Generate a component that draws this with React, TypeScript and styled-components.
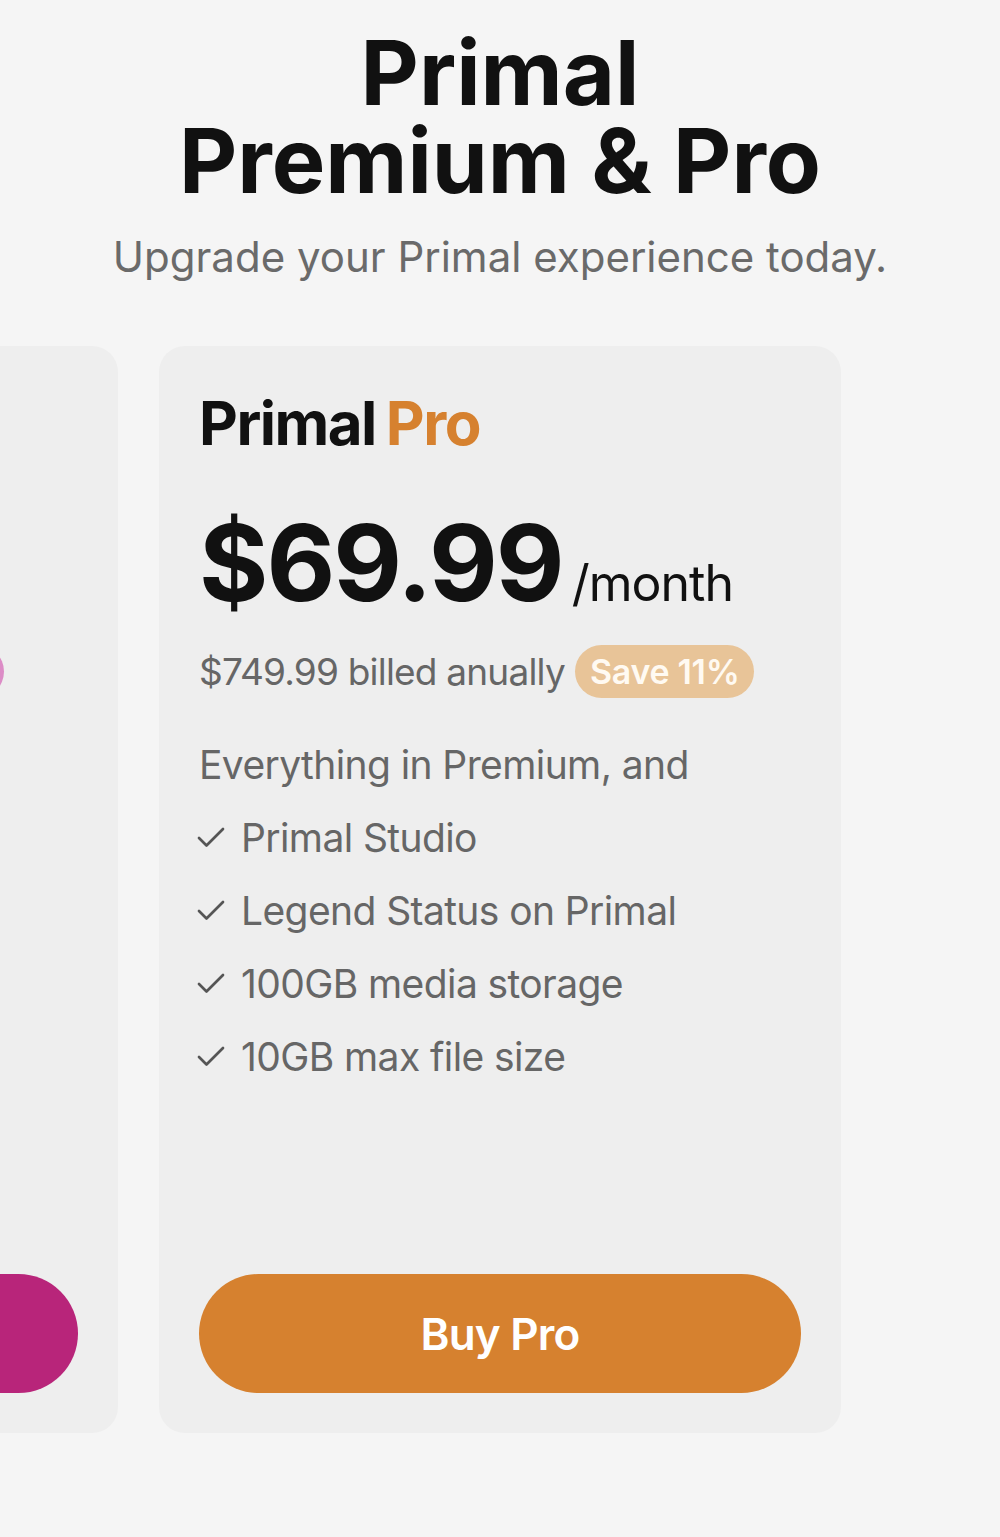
import React from "react";
import styled, { createGlobalStyle } from "styled-components";

const Global = createGlobalStyle`
  html, body { margin: 0; padding: 0; background: #f5f5f5; }
  body { font-family: Inter, "Noto Sans", "Liberation Sans", sans-serif; }
  * { box-sizing: border-box; }
`;

const Page = styled.div`
  width: 1000px;
  height: 1537px;
  overflow: hidden;
  background: #f5f5f5;
  padding-top: 29px;
`;

const Header = styled.header`
  display: flex;
  flex-direction: column;
  align-items: center;
  text-align: center;
`;

const Title = styled.h1`
  margin: 0;
  font-size: 90px;
  line-height: 88px;
  font-weight: 700;
  letter-spacing: 0;
  color: #111111;
`;

const Subtitle = styled.p`
  margin: 24px 0 0;
  font-size: 42px;
  line-height: 56px;
  font-weight: 400;
  color: #6a6a6a;
`;

const Carousel = styled.div`
  margin-top: 61px;
  width: 100%;
`;

const Track = styled.div`
  display: flex;
  gap: 41px;
  margin-left: calc(50% - 341px - 723px);
`;

const Card = styled.section`
  flex: 0 0 682px;
  height: 1087px;
  background: #eeeeee;
  border-radius: 26px;
  padding: 40px;
  display: flex;
  flex-direction: column;
`;

const Brand = styled.div`
  display: flex;
  gap: 10px;
  font-size: 60px;
  line-height: 72px;
  font-weight: 700;
  letter-spacing: -1.5px;
  color: #111111;
  margin-top: 1px;
`;

const BrandAccent = styled.span<{ $color: string }>`
  color: ${(p) => p.$color};
`;

const PriceRow = styled.div`
  display: flex;
  align-items: baseline;
  gap: 9px;
  margin-top: 47px;
`;

const Price = styled.span`
  font-size: 106px;
  line-height: 114px;
  font-weight: 700;
  letter-spacing: -2px;
  color: #111111;
`;

const Period = styled.span`
  font-size: 50px;
  font-weight: 400;
  letter-spacing: -1px;
  color: #111111;
`;

const BilledRow = styled.div`
  display: flex;
  align-items: center;
  gap: 10px;
  margin-top: 25px;
`;

const Billed = styled.span`
  font-size: 37px;
  line-height: 53px;
  color: #666666;
  letter-spacing: -0.8px;
`;

const Badge = styled.span<{ $bg: string }>`
  display: inline-flex;
  align-items: center;
  height: 53px;
  padding: 0 15px;
  border-radius: 27px;
  background: ${(p) => p.$bg};
  color: #fffaf2;
  font-size: 34px;
  font-weight: 600;
  letter-spacing: -0.3px;
`;

const Intro = styled.p`
  margin: 30px 0 0;
  font-size: 39px;
  line-height: 73px;
  color: #666666;
  letter-spacing: -0.6px;
`;

const Features = styled.ul`
  list-style: none;
  margin: 0;
  padding: 0;
`;

const Feature = styled.li`
  display: flex;
  align-items: center;
  gap: 12px;
  height: 73px;
  font-size: 39px;
  color: #666666;
  letter-spacing: -0.6px;
  svg { flex: 0 0 auto; margin-left: -6px; }
`;

const BuyButton = styled.button<{ $bg: string }>`
  margin-top: auto;
  width: 100%;
  height: 119px;
  border: none;
  border-radius: 60px;
  background: ${(p) => p.$bg};
  color: #ffffff;
  font-family: inherit;
  font-size: 44px;
  font-weight: 600;
  letter-spacing: -0.8px;
  cursor: pointer;
`;

const Check = () => (
  <svg width="36" height="36" viewBox="0 0 24 24" fill="none" stroke="#555555" strokeWidth="1.8" strokeLinecap="round" strokeLinejoin="round">
    <polyline points="20 6 9 17 4 12" />
  </svg>
);

type Plan = {
  name: string;
  accent: string;
  accentColor: string;
  price: string;
  billed: string;
  save: string;
  badge: string;
  intro: string;
  features: string[];
  cta: string;
  button: string;
};

const plans: Plan[] = [
  {
    name: "Primal",
    accent: "Premium",
    accentColor: "#b8257a",
    price: "$6.99",
    billed: "$69.99 billed anually",
    save: "Save 7%",
    badge: "#dc8cc6",
    intro: "Everything in Free, and",
    features: ["Primal Name", "Premium Status", "10GB media storage", "1GB max file size"],
    cta: "Buy Premium",
    button: "#b8257a",
  },
  {
    name: "Primal",
    accent: "Pro",
    accentColor: "#d6812f",
    price: "$69.99",
    billed: "$749.99 billed anually",
    save: "Save 11%",
    badge: "#e8c498",
    intro: "Everything in Premium, and",
    features: ["Primal Studio", "Legend Status on Primal", "100GB media storage", "10GB max file size"],
    cta: "Buy Pro",
    button: "#d6812f",
  },
];

export default function App() {
  return (
    <Page>
      <Global />
      <Header>
        <Title>
          Primal
          <br />
          Premium &amp; Pro
        </Title>
        <Subtitle>Upgrade your Primal experience today.</Subtitle>
      </Header>
      <Carousel>
        <Track>
          {plans.map((p) => (
            <Card key={p.accent}>
              <Brand>
                <span>{p.name}</span>
                <BrandAccent $color={p.accentColor}>{p.accent}</BrandAccent>
              </Brand>
              <PriceRow>
                <Price>{p.price}</Price>
                <Period>/month</Period>
              </PriceRow>
              <BilledRow>
                <Billed>{p.billed}</Billed>
                <Badge $bg={p.badge}>{p.save}</Badge>
              </BilledRow>
              <Intro>{p.intro}</Intro>
              <Features>
                {p.features.map((f) => (
                  <Feature key={f}>
                    <Check />
                    <span>{f}</span>
                  </Feature>
                ))}
              </Features>
              <BuyButton $bg={p.button}>{p.cta}</BuyButton>
            </Card>
          ))}
        </Track>
      </Carousel>
    </Page>
  );
}
